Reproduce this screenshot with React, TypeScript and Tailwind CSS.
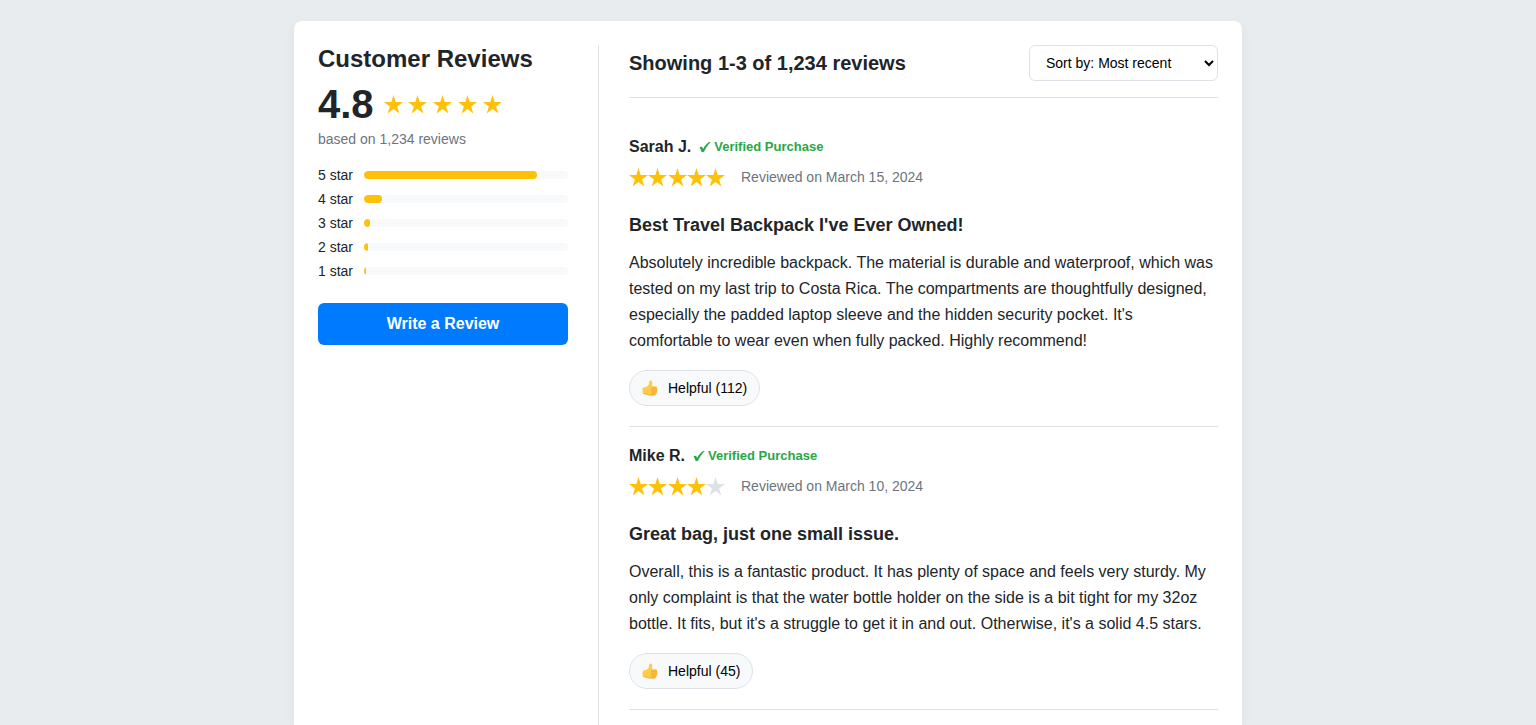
type Review = {
  name: string;
  stars: number;
  date: string;
  title: string;
  body: string;
  helpful: number;
};

const reviews: Review[] = [
  {
    name: "Sarah J.",
    stars: 5,
    date: "March 15, 2024",
    title: "Best Travel Backpack I've Ever Owned!",
    body: "Absolutely incredible backpack. The material is durable and waterproof, which was tested on my last trip to Costa Rica. The compartments are thoughtfully designed, especially the padded laptop sleeve and the hidden security pocket. It's comfortable to wear even when fully packed. Highly recommend!",
    helpful: 112,
  },
  {
    name: "Mike R.",
    stars: 4,
    date: "March 10, 2024",
    title: "Great bag, just one small issue.",
    body: "Overall, this is a fantastic product. It has plenty of space and feels very sturdy. My only complaint is that the water bottle holder on the side is a bit tight for my 32oz bottle. It fits, but it's a struggle to get it in and out. Otherwise, it's a solid 4.5 stars.",
    helpful: 45,
  },
];

const breakdown = [
  { stars: 5, percent: 85 },
  { stars: 4, percent: 9 },
  { stars: 3, percent: 3 },
  { stars: 2, percent: 2 },
  { stars: 1, percent: 1 },
];

function Star({ filled = true }: { filled?: boolean }) {
  return (
    <svg
      viewBox="0 0 20 20"
      className={filled ? "size-[19px] shrink-0 text-[#ffc107]" : "size-[19px] shrink-0 text-[#dee2e6]"}
      fill="currentColor"
      aria-hidden="true"
    >
      <path d="M10 0 12.35 7.4H20L13.8 12 16.2 19.4 10 14.8 3.8 19.4 6.2 12 0 7.4H7.65Z" />
    </svg>
  );
}

function Check() {
  return (
    <svg viewBox="0 0 12 12" className="size-3" fill="currentColor" aria-hidden="true">
      <path d="M0.5 7C0.9 5.7 2.9 5.1 3.5 6.5L4.1 7.9C5.7 4.9 7.6 2.4 9.7 1.2 10.3 0.9 11.1 0.9 11.7 1 9.1 3.4 7 6.8 5.4 10 4.7 11.4 2.9 11.6 2.4 10.4 1.8 8.9 1.5 7.2 0.5 7Z" />
    </svg>
  );
}

function ThumbsUp() {
  return (
    <svg viewBox="0 0 18 18" className="size-4" aria-hidden="true">
      <path
        d="M0.6 10.4C0.6 8.8 1.8 8.2 3.4 8.2 5.8 7.8 8 6 8 3.2 8 1.4 8.4 0.5 9.5 0.5 11.2 0.6 11.8 2.4 11.6 4.2L11 7.3H15C17.2 7.3 17.7 9.3 16.6 9.9 17.7 10.6 17.5 12 16.4 12.5 17.2 13.2 16.9 14.4 15.9 14.8 16.2 16.2 15.2 17.2 13.6 17.2H9C7 17.2 6 16.2 4.2 16.2 2 16.2 0.6 15 0.6 13.4Z"
        fill="#ffcb4a"
      />
      <path
        d="M10.6 7.4H15C17.2 7.3 17.7 9.3 16.6 9.9 17.7 10.6 17.5 12 16.4 12.5 17.2 13.2 16.9 14.4 15.9 14.8 16.2 16.2 15.2 17.2 13.6 17.2H10.8C9.6 16.6 9.8 15.1 10.6 14.7 9.4 14.2 9.5 12.7 10.4 12.2 9.3 11.5 9.5 10.2 10.5 9.8 9.5 9.1 9.6 7.9 10.6 7.4Z"
        fill="#fcbf3c"
      />
      <path
        d="M10.8 9.8H16.4M10.6 12.3H16.2M10.8 14.7H15.7M2 15.2C4.6 15.4 6 16.8 8.8 17H13.6"
        stroke="#eba233"
        strokeWidth="0.8"
        strokeLinecap="round"
        fill="none"
      />
    </svg>
  );
}

function ReviewCard({ review }: { review: Review }) {
  return (
    <article className="border-b border-[#dee2e6] py-5">
      <div className="flex h-[18px] items-center gap-2">
        <h4 className="text-base font-bold">{review.name}</h4>
        <span className="flex items-center gap-[3px] text-[13px] font-bold text-[#28a745]">
          <Check />
          Verified Purchase
        </span>
      </div>
      <div className="mt-[11px] flex h-5 items-center gap-4">
        <div
          className="flex w-24 justify-between"
          role="img"
          aria-label={`${review.stars} out of 5 stars`}
        >
          {[1, 2, 3, 4, 5].map((n) => (
            <Star key={n} filled={n <= review.stars} />
          ))}
        </div>
        <span className="text-[14px] text-[#6c757d]">Reviewed on {review.date}</span>
      </div>
      <h3 className="mt-[26px] text-lg leading-6 font-bold">{review.title}</h3>
      <p className="mt-[13px] text-base leading-[26px]">{review.body}</p>
      <button
        type="button"
        className="mt-4 flex h-9 items-center gap-[10px] rounded-full border border-[#dee2e6] bg-[#f8f9fa] px-3 text-[14px] text-black"
      >
        <ThumbsUp />
        Helpful ({review.helpful})
      </button>
    </article>
  );
}

export default function App() {
  return (
    <div className="flex min-h-screen flex-col bg-[#e9ecef] px-5 pt-[21px] font-['Liberation_Sans',Arial,sans-serif] text-[#212529]">
      <div className="mx-auto flex w-full max-w-[948px] flex-1 gap-[30px] rounded-t-lg bg-white px-6 pt-6 shadow-[0_4px_12px_rgba(0,0,0,0.05)]">
        <aside className="w-[281px] shrink-0 border-r border-[#dee2e6] pr-[30px]">
          <h2 className="text-2xl leading-7 font-bold">Customer Reviews</h2>
          <div className="mt-[9px] flex items-center gap-[10px]">
            <span className="text-[40px] leading-[44px] font-bold">4.8</span>
            <div
              className="flex w-[118px] justify-between"
              role="img"
              aria-label="4.8 out of 5 stars"
            >
              {[1, 2, 3, 4, 5].map((n) => (
                <Star key={n} />
              ))}
            </div>
          </div>
          <p className="mt-1 text-[14px] leading-[18px] text-[#6c757d]">based on 1,234 reviews</p>
          <ul className="mt-[19px] flex flex-col gap-2">
            {breakdown.map((row) => (
              <li key={row.stars} className="flex h-4 items-center gap-[10px] text-[14px]">
                <span className="w-9 whitespace-nowrap">{row.stars} star</span>
                <div className="h-2 flex-1 overflow-hidden rounded bg-[#f8f9fa]">
                  <div className="h-full rounded bg-[#ffc107]" style={{ width: `${row.percent}%` }} />
                </div>
              </li>
            ))}
          </ul>
          <button
            type="button"
            className="mt-6 h-[42px] w-full rounded-md bg-[#007bff] text-base font-bold text-white"
          >
            Write a Review
          </button>
        </aside>
        <main className="min-w-0 flex-1">
          <header className="flex items-center justify-between border-b border-[#dee2e6] pb-4">
            <h3 className="text-xl font-bold">Showing 1-3 of 1,234 reviews</h3>
            <select
              aria-label="Sort reviews"
              className="h-9 w-[189px] rounded-md border border-[#dee2e6] bg-white px-3 text-[14px] text-black"
            >
              <option>Sort by: Most recent</option>
              <option>Sort by: Most helpful</option>
              <option>Sort by: Highest rating</option>
              <option>Sort by: Lowest rating</option>
            </select>
          </header>
          <section className="mt-5">
            {reviews.map((review) => (
              <ReviewCard key={review.name} review={review} />
            ))}
          </section>
        </main>
      </div>
    </div>
  );
}
